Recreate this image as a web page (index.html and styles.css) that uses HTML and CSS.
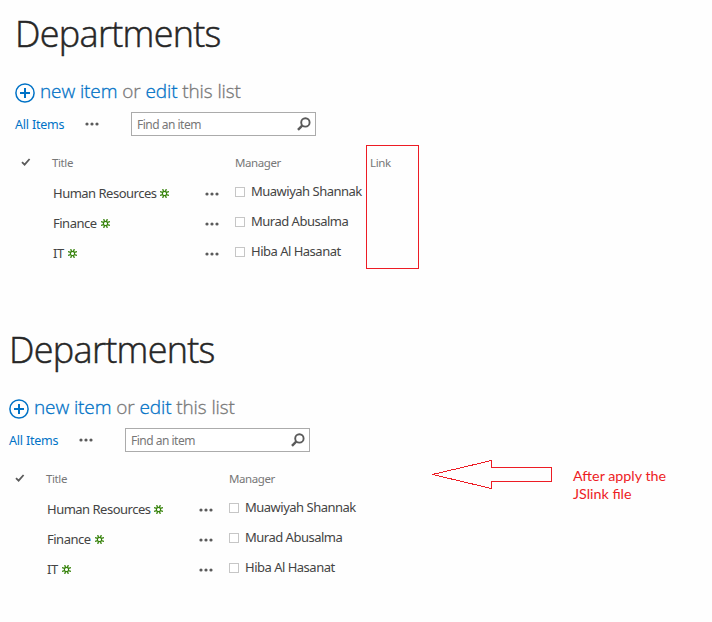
FILE: index.html
```html
<!DOCTYPE html>
<html lang="en">
<head>
<meta charset="utf-8">
<title>Departments</title>
<link rel="stylesheet" href="styles.css">
</head>
<body>
<svg class="defs" width="0" height="0">
  <symbol id="plus" viewBox="0 0 20 20"><circle cx="10" cy="10" r="9.1" fill="none" stroke="#0072c6" stroke-width="1.5"/><path d="M10 5v10M5 10h10" stroke="#0072c6" stroke-width="2"/></symbol>
  <symbol id="dots" viewBox="0 0 14 4"><g fill="#5a5a5a"><circle cx="2" cy="2" r="1.6"/><circle cx="7" cy="2" r="1.6"/><circle cx="12" cy="2" r="1.6"/></g></symbol>
  <symbol id="search" viewBox="0 0 14 14"><circle cx="8.4" cy="5.4" r="4.2" fill="none" stroke="#5a5a5a" stroke-width="1.9"/><path d="M5.4 8.4L1 12.8" stroke="#5a5a5a" stroke-width="2.4"/></symbol>
  <symbol id="check" viewBox="0 0 10 8"><path d="M1 4.2L3.6 6.7L8.6 1" fill="none" stroke="#5a5a5a" stroke-width="1.8"/></symbol>
  <symbol id="new" viewBox="0 0 9 9"><circle cx="4.500" cy="4.500" r="2.1" fill="none" stroke="#35820a" stroke-width="1.1"/><path d="M2.700 0L3.600 2.600M6.300 0L5.400 2.600M2.700 9L3.600 6.400M6.300 9L5.400 6.400M0 2.500L2.600 3.400M9 2.500L6.400 3.400M0 6.500L2.600 5.600M9 6.500L6.400 5.600" fill="none" stroke="#35820a" stroke-width="1.3"/></symbol>
</svg>
<main class="page">
  <section class="list before">
    <h1 class="title">Departments</h1>
    <div class="hero"><svg class="plus"><use href="#plus"/></svg><p class="hero-text"><a>new item</a> or <a>edit</a> this list</p></div>
    <div class="toolbar"><a class="view">All Items</a><svg class="dots"><use href="#dots"/></svg><div class="search"><span class="hint">Find an item</span><svg class="glass"><use href="#search"/></svg></div></div>
    <div class="row head"><svg class="check"><use href="#check"/></svg><span class="col-title">Title</span><span class="col-manager">Manager</span><span class="col-link">Link</span></div>
    <div class="row"><div class="name"><span>Human Resources</span><svg class="new"><use href="#new"/></svg></div><svg class="dots"><use href="#dots"/></svg><i class="box"></i><span class="person">Muawiyah Shannak</span></div>
    <div class="row"><div class="name"><span>Finance</span><svg class="new"><use href="#new"/></svg></div><svg class="dots"><use href="#dots"/></svg><i class="box"></i><span class="person">Murad Abusalma</span></div>
    <div class="row"><div class="name"><span>IT</span><svg class="new"><use href="#new"/></svg></div><svg class="dots"><use href="#dots"/></svg><i class="box"></i><span class="person">Hiba Al Hasanat</span></div>
    <div class="marker"></div>
  </section>
  <div class="after-area">
    <section class="list after">
      <h1 class="title">Departments</h1>
      <div class="hero"><svg class="plus"><use href="#plus"/></svg><p class="hero-text"><a>new item</a> or <a>edit</a> this list</p></div>
      <div class="toolbar"><a class="view">All Items</a><svg class="dots"><use href="#dots"/></svg><div class="search"><span class="hint">Find an item</span><svg class="glass"><use href="#search"/></svg></div></div>
      <div class="row head"><svg class="check"><use href="#check"/></svg><span class="col-title">Title</span><span class="col-manager">Manager</span></div>
      <div class="row"><div class="name"><span>Human Resources</span><svg class="new"><use href="#new"/></svg></div><svg class="dots"><use href="#dots"/></svg><i class="box"></i><span class="person">Muawiyah Shannak</span></div>
      <div class="row"><div class="name"><span>Finance</span><svg class="new"><use href="#new"/></svg></div><svg class="dots"><use href="#dots"/></svg><i class="box"></i><span class="person">Murad Abusalma</span></div>
      <div class="row"><div class="name"><span>IT</span><svg class="new"><use href="#new"/></svg></div><svg class="dots"><use href="#dots"/></svg><i class="box"></i><span class="person">Hiba Al Hasanat</span></div>
    </section>
    <aside class="note">
      <svg class="arrow" width="122" height="30" viewBox="0 0 122 30"><path d="M1.500 14.500L60.500 .500V7.500H120.500V21.500H60.500V28.500Z" fill="none" stroke="#ed1c24" shape-rendering="crispEdges"/></svg>
      <p class="caption">After apply the<br>JSlink file</p>
    </aside>
  </div>
</main>
</body>
</html>
```
FILE: styles.css
```css
* { box-sizing: border-box; }
body { margin: 0; background: #fefefe; font-family: "Noto Sans", "Open Sans", sans-serif; color: #444; }
h1, p { margin: 0; font-weight: 400; }
svg { display: block; flex: none; }
.defs { position: absolute; }
.page { width: 712px; height: 622px; overflow: hidden; padding-top: 8px; }
.list { position: relative; height: 316px; padding-left: 15px; }
.title { height: 72px; font-family: "Open Sans", sans-serif; font-size: 36px; line-height: 51px; font-weight: 300; letter-spacing: -0.7px; -webkit-text-stroke: 0.5px #262626; color: #262626; white-space: nowrap; }
.hero { display: flex; align-items: center; height: 24px; }
.plus { width: 20px; height: 20px; margin: 2px 5px 0 0; }
.hero-text { margin-top: -2px; font-family: "Open Sans", sans-serif; font-size: 19px; line-height: 24px; font-weight: 300; letter-spacing: -0.1px; -webkit-text-stroke: 0.3px currentColor; color: #777; white-space: nowrap; }
a { color: #0072c6; }
.toolbar { display: flex; align-items: center; height: 24px; margin-top: 8px; }
.view { width: 70px; font-size: 12.5px; letter-spacing: -0.2px; white-space: nowrap; }
.dots { width: 14px; height: 4px; }
.search { display: flex; align-items: center; justify-content: space-between; width: 185px; height: 24px; margin-left: 32px; padding: 0 4px 0 5px; border: 1px solid #ababab; background: #fff; }
.hint { margin-top: 1px; font-size: 12px; letter-spacing: -0.5px; color: #777; white-space: nowrap; }
.glass { width: 14px; height: 14px; }
.row { display: flex; align-items: center; height: 30px; padding-left: 38px; font-size: 13px; letter-spacing: -0.5px; white-space: nowrap; }
.head { height: 32px; margin-top: 10px; padding-left: 6px; font-size: 11.5px; letter-spacing: -0.4px; color: #777; }
.check { width: 10px; height: 8px; margin: -1px 21px 0 0; }
.col-title { width: 183px; }
.col-manager { width: 135px; }
.name { display: flex; align-items: center; gap: 4px; width: 152px; }
.new { width: 9px; height: 9px; margin-top: 1px; }
.row .dots { margin: 1px 16px 0 0; }
.box { width: 10px; height: 10px; margin: -2px 6px 0 0; border: 1px solid #c6c6c6; background: #fff; }
.person { margin-top: -4px; letter-spacing: -0.5px; }
.marker { position: absolute; left: 366px; top: 137px; width: 53px; height: 124px; border: 1px solid #ed1c24; }
.after-area { display: flex; }
.after { width: 403px; padding-left: 9px; }
.note { display: flex; align-items: flex-start; padding: 136px 0 0 28px; }
.caption { margin: 7px 0 0 20px; font-family: Lato, sans-serif; font-size: 14.3px; line-height: 18px; color: #ed1c24; white-space: nowrap; }
```
